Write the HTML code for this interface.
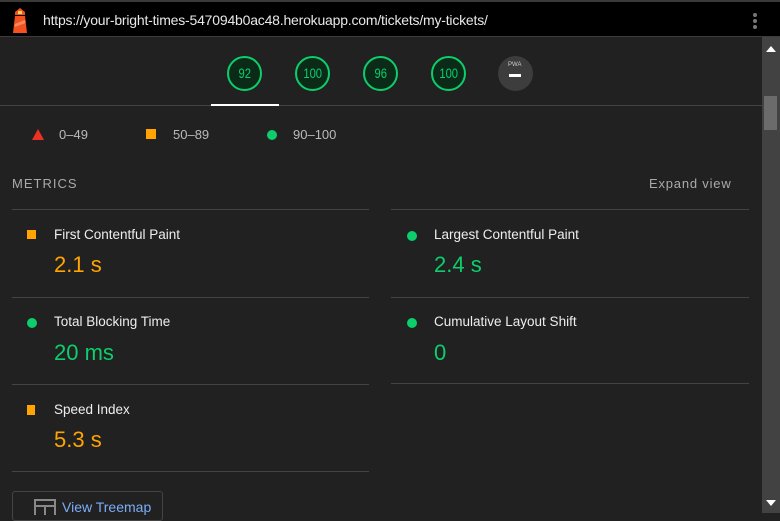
<!DOCTYPE html>
<html><head><style>
*{margin:0;padding:0;box-sizing:border-box}
body{width:780px;height:513px;overflow:hidden;background:#212121;font-family:"Liberation Sans",sans-serif;position:relative}
.top{position:absolute;left:0;top:0;width:780px;height:37px;background:#000;border-top:2px solid #3a3a3a;border-bottom:1px solid #3c3c3c}
.url{position:absolute;left:43px;top:10px;color:#e8e8e8;font-size:14px;letter-spacing:-0.2px}
.dots{position:absolute;left:753px;top:11px}
.dots i{display:block;width:4px;height:4px;border-radius:2px;background:#777;margin-bottom:2px}
.sb{position:absolute;left:762px;top:37px;width:18px;height:476px;background:#424242}
.thumb{position:absolute;left:764px;top:96px;width:13px;height:34px;background:#6b6b6b}
.g{position:absolute;top:56px;width:35px;height:35px;border-radius:50%;border:2.5px solid #0cce6b;background:#0b2a18;color:#0cce6b;font-family:"Liberation Sans",sans-serif;font-size:14px;text-align:center;line-height:30px}
.g span{display:inline-block;transform:scaleX(0.8)}
.hr{position:absolute;height:1px;background:#444}
.t{position:absolute;color:#bbb;font-size:13px}
.lbl{position:absolute;color:#eee;font-size:13.5px}
.val{position:absolute;font-size:22px}
.o{color:#ffa400}.gr{color:#0cce6b}
.sq{position:absolute;width:9px;height:9px;background:#ffa400}
.dot{position:absolute;width:10px;height:10px;border-radius:50%;background:#0cce6b}
</style></head><body>
<div class="top">
<svg style="position:absolute;left:10px;top:5px" width="20" height="27" viewBox="0 0 20 27"><path d="M10 1 L15 5 V8 H5 V5Z" fill="#f4511e"/><rect x="8" y="4" width="4" height="3" fill="#ffd54f"/><path d="M5 9 H15 L17 26 H3Z" fill="#f4511e"/><path d="M5 17 L15 13 L15.5 16 L4.5 20Z" fill="#ff8a65"/></svg>
<div class="url">https://your-bright-times-547094b0ac48.herokuapp.com/tickets/my-tickets/</div>
<div class="dots"><i></i><i></i><i></i></div>
</div>
<div class="sb"></div><div class="thumb"></div>
<div style="position:absolute;left:766px;top:46px;width:0;height:0;border-left:5px solid transparent;border-right:5px solid transparent;border-bottom:6px solid #fff"></div>
<div style="position:absolute;left:766px;top:500px;width:0;height:0;border-left:5px solid transparent;border-right:5px solid transparent;border-top:6px solid #fff"></div>
<div class="g" style="left:227px"><span>92</span></div>
<div class="g" style="left:295px"><span>100</span></div>
<div class="g" style="left:363px"><span>96</span></div>
<div class="g" style="left:431px"><span>100</span></div>
<div style="position:absolute;left:498px;top:56px;width:35px;height:35px;border-radius:50%;background:#3d3d3d"><div style="position:absolute;left:10px;top:6px;color:#ccc;font-size:6px">PWA</div><div style="position:absolute;left:11px;top:18px;width:12px;height:3px;background:#fff"></div></div>
<div class="hr" style="left:0;top:105px;width:762px"></div>
<div style="position:absolute;left:211px;top:104px;width:68px;height:2px;background:#fff"></div>
<svg style="position:absolute;left:32px;top:129px" width="12" height="11"><path d="M6 0 L12 11 H0Z" fill="#eb3223"/></svg>
<div class="t" style="left:59px;top:127px">0–49</div>
<div class="sq" style="left:146px;top:129px;width:10px;height:10px"></div>
<div class="t" style="left:173px;top:127px">50–89</div>
<div class="dot" style="left:267px;top:130px"></div>
<div class="t" style="left:293px;top:127px">90–100</div>
<div class="t" style="left:12px;top:176px;color:#aaa;letter-spacing:1px">METRICS</div>
<div class="t" style="left:649px;top:176px;color:#aaa;letter-spacing:0.8px">Expand view</div>
<div class="hr" style="left:12px;top:209px;width:357px"></div>
<div class="hr" style="left:391px;top:209px;width:358px"></div>
<div class="sq" style="left:27px;top:230px"></div>
<div class="lbl" style="left:54px;top:227px">First Contentful Paint</div>
<div class="val o" style="left:54px;top:252px">2.1 s</div>
<div class="dot" style="left:407px;top:231px"></div>
<div class="lbl" style="left:434px;top:227px">Largest Contentful Paint</div>
<div class="val gr" style="left:434px;top:252px">2.4 s</div>
<div class="hr" style="left:12px;top:297px;width:357px"></div>
<div class="hr" style="left:391px;top:297px;width:358px"></div>
<div class="dot" style="left:27px;top:318px"></div>
<div class="lbl" style="left:54px;top:314px">Total Blocking Time</div>
<div class="val gr" style="left:54px;top:340px">20 ms</div>
<div class="dot" style="left:407px;top:318px"></div>
<div class="lbl" style="left:434px;top:314px">Cumulative Layout Shift</div>
<div class="val gr" style="left:434px;top:340px">0</div>
<div class="hr" style="left:12px;top:384px;width:357px"></div>
<div class="hr" style="left:391px;top:383px;width:358px"></div>
<div class="sq" style="left:27px;top:405px;width:8px;height:10px"></div>
<div class="lbl" style="left:54px;top:402px">Speed Index</div>
<div class="val o" style="left:54px;top:427px">5.3 s</div>
<div class="hr" style="left:12px;top:471px;width:357px"></div>
<div style="position:absolute;left:12px;top:491px;width:151px;height:30px;border:1px solid #444;border-radius:3px"></div>
<svg style="position:absolute;left:34px;top:499px" width="22" height="16"><rect x="1" y="1" width="20" height="16" fill="none" stroke="#888" stroke-width="2"/><path d="M1 7 H21 M11 7 V17" stroke="#888" stroke-width="2"/></svg>
<div style="position:absolute;left:62px;top:499px;color:#7cacf8;font-size:14px">View Treemap</div>
</body></html>
